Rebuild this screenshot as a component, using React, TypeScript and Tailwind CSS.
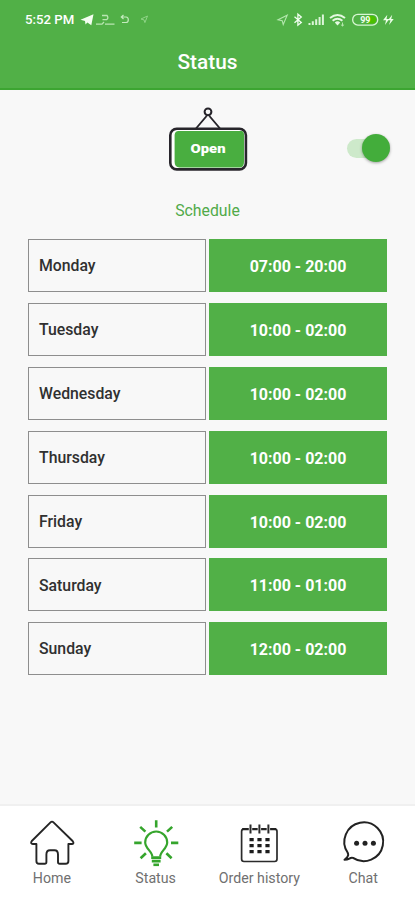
import React from "react"

const schedule = [
  { day: "Monday", hours: "07:00 - 20:00" },
  { day: "Tuesday", hours: "10:00 - 02:00" },
  { day: "Wednesday", hours: "10:00 - 02:00" },
  { day: "Thursday", hours: "10:00 - 02:00" },
  { day: "Friday", hours: "10:00 - 02:00" },
  { day: "Saturday", hours: "11:00 - 01:00" },
  { day: "Sunday", hours: "12:00 - 02:00" },
]

const HomeIcon = () => (
  <svg className="h-[50px] w-[52px]" viewBox="0 0 52 50" fill="none" stroke="#252525" strokeWidth="1.9" strokeLinejoin="round" strokeLinecap="round">
    <path d="M26 3.6Q26.8 3.6 27.5 4.3L46.6 23Q48.6 25.6 46 26H42.4V43Q42.4 45.8 39.6 45.8H33.7Q32 45.8 32 44V36.5Q32 32.2 28.5 32.2H24Q20.4 32.2 20.4 36.5V44Q20.4 45.8 18.7 45.8H13Q10.4 45.8 10.4 43V26H7Q4 25.6 5.8 23L24.5 4.3Q25.2 3.6 26 3.6Z" />
  </svg>
)

const BulbIcon = () => (
  <svg className="h-[50px] w-[52px]" viewBox="0 0 52 50" fill="none" stroke="#35a52c" strokeWidth="2.2">
    <path d="M22.3 38.5C22.3 33.5 15.2 30.5 15.2 24.5A11 11 0 0 1 37.2 24.5C37.2 30.5 30.2 33.5 30.2 38.5" />
    <path d="M21.2 39.6H31.2M21.8 43.2H30.6" strokeWidth="2.8" />
    <path d="M23.4 46.8H29" strokeWidth="2.6" />
    <path d="M26.2 2.3V9.5M4.2 24.9H11.6M41 24.9H48.3M10.2 8.9L15.4 13.6M42.2 8.9L37 13.6M10.6 40.2L15.9 35.2M41.6 40.2L36.4 35.2" strokeWidth="2.6" />
  </svg>
)

const CalendarIcon = () => (
  <svg className="h-[50px] w-[52px]" viewBox="0 0 52 50" fill="none" stroke="#2b2b2b" strokeWidth="1.7">
    <rect x="8.6" y="11" width="35.4" height="32.5" rx="2.4" />
    <path d="M9.2 11.1H43.2" stroke="#222222" strokeWidth="2.1" />
    <path d="M17.5 6.6V15.6M26.4 6.6V15.6M35.4 6.6V15.6" stroke="#ffffff" strokeWidth="3.4" />
    <path d="M17.5 6.6V15.6M26.4 6.6V15.6M35.4 6.6V15.6" strokeWidth="2" />
    <path d="M16.5 21.7H20.7M24.4 21.7H28.6M32.4 21.7H36.6M16.5 27.6H20.7M24.4 27.6H28.6M32.4 27.6H36.6M16.5 33.6H20.7M24.4 33.6H28.6M32.4 33.6H36.6" stroke="#1d1d1d" strokeWidth="3.2" />
  </svg>
)

const ChatIcon = () => (
  <svg className="h-[50px] w-[52px]" viewBox="-1.2 0 52 50" fill="none" stroke="#222222" strokeWidth="2" strokeLinejoin="round">
    <path d="M9.4 34.5A19.4 19.4 0 1 1 14.8 39.9Q13 39.4 11.2 40.6Q9 41.8 6.3 41.8Q9.8 39.4 10 37.2Q10.1 36 9.4 34.5Z" />
    <g fill="#222222" stroke="none">
      <circle cx="18.4" cy="25.3" r="2.5" />
      <circle cx="26.8" cy="25.3" r="2.5" />
      <circle cx="35.2" cy="25.3" r="2.5" />
    </g>
  </svg>
)

const tabs = [
  { label: "Home", icon: <HomeIcon /> },
  { label: "Status", icon: <BulbIcon /> },
  { label: "Order history", icon: <CalendarIcon /> },
  { label: "Chat", icon: <ChatIcon /> },
]

const StatusBar = () => (
  <div className="flex h-[40px] items-center justify-between pl-[25px] pr-[21px]">
    <div className="flex items-center gap-[6px]">
      <span className="text-[13.2px] leading-5 font-medium whitespace-nowrap text-white">5:52 PM</span>
      <svg className="h-5 w-[74px]" viewBox="0 0 74 20" fill="none">
        <path d="M0.5 9.8L13.5 4.2L11.3 15.2L7.4 12.4L5.5 14.5L5 11.1Z" fill="#f4fff1" />
        <path d="M22 5.5H27Q29 8 26.5 9.7H22.5M16 14.2H22L24 12M25 14.2H34.5" stroke="#b9e5b2" strokeWidth="1.3" />
        <path d="M41.5 7H46Q48.3 7.2 48.3 9.7Q48.3 12.5 46 12.5H42M43.5 5L41.3 7L43.5 9" stroke="#c4eabe" strokeWidth="1.2" />
        <path d="M61 9L67.5 6L64.9 12.6L64 9.9Z" stroke="#8fd487" strokeWidth="1" />
      </svg>
    </div>
    <svg className="h-5 w-[118px]" viewBox="0 0 118 20" fill="none">
      <path d="M2 9.7L11.2 5.2L7.2 14.5L6.2 10.7Z" stroke="#b4e7ae" strokeWidth="1.1" />
      <path d="M18.5 6.8L25.3 12.4L21.9 15.2V4.2L25.3 7L18.5 12.8" stroke="#f1fff0" strokeWidth="1.3" />
      <path d="M33.5 15V13M36.8 15V11.2M40.2 15V9.2M43.6 15V7M46.9 15V4.6" stroke="#dcf5d9" strokeWidth="2" />
      <path d="M54 8Q61.5 1.8 69 8M56.6 10.8Q61.5 6.8 66.4 10.8" stroke="#e4f9e1" strokeWidth="1.9" />
      <path d="M58.8 12.4Q61.5 10.3 64.2 12.4L61.5 15.4Z" fill="#e4f9e1" />
      <path d="M66.5 12.5V16M64.9 14.6L66.5 16L68.1 14.6" stroke="#b5e6ad" />
      <rect x="76.7" y="4.3" width="25" height="10.8" rx="5.2" stroke="#d8f6d3" strokeWidth="1.3" />
      <path d="M91 6H96.5Q100 6.3 100 9.7Q100 13.2 96.5 13.4H91Z" fill="#4bc000" />
      <text x="89.3" y="13" textAnchor="middle" fill="#f3fff0" fontSize="9" fontWeight="700">99</text>
      <path d="M111.3 4.7L107 10.2H110L109 14.9L113.2 9H110.5ZM116.2 4.7L112 10.2H114.5L113 14.9L117.7 9H115.2Z" fill="#edffe9" />
    </svg>
  </div>
)

const OpenSign = () => (
  <svg className="h-[66px] w-[80px]" viewBox="0 0 80 66" fill="none">
    <circle cx="40" cy="5.8" r="3.4" stroke="#252329" strokeWidth="2" />
    <path d="M28 22.5L38.6 10M52 22.5L41.4 10" stroke="#252329" strokeWidth="1.9" />
    <rect x="2.3" y="22.8" width="75.6" height="40.6" rx="6.5" fill="#ffffff" stroke="#28262c" strokeWidth="2.6" />
    <path d="M10.5 25H73.5Q76 25 76 29V56Q76 61.4 72 61.4H11.5Q6.6 61.4 6.6 56V29Q7 25 10.5 25Z" fill="#49ae40" />
    <text x="40" y="47.4" textAnchor="middle" fill="#ffffff" fontSize="13.4" fontWeight="900" textLength="35" lengthAdjust="spacingAndGlyphs">Open</text>
  </svg>
)

const App = () => {
  return (
    <div className="flex h-[900px] w-[415px] flex-col overflow-hidden bg-[#f8f8f8] font-['Roboto','Liberation_Sans',sans-serif]">
      <header className="h-[90px] shrink-0 border-b-2 border-[#3ca531] bg-[#51b047]">
        <StatusBar />
        <h1 className="pt-[8px] text-center text-[20.8px] leading-7 font-medium text-white">Status</h1>
      </header>

      <main className="flex-1 px-7">
        <div className="grid h-[84px] grid-cols-[1fr_80px_1fr] pt-[16px]">
          <div className="col-start-2">
            <OpenSign />
          </div>
          <div className="mt-[28px] -mr-[3px] flex h-7 items-center justify-end">
            <div className="flex h-[19px] w-[43px] items-center justify-end rounded-full bg-[#cde9ca]">
              <div className="size-[28px] shrink-0 rounded-full bg-[#43ad3b] shadow-[0_1px_3px_rgba(0,0,0,0.35)]"></div>
            </div>
          </div>
        </div>

        <h2 className="mt-[25px] text-center text-[15.8px] leading-6 text-[#51aa49]">Schedule</h2>

        <div className="mt-[16.2px] flex flex-col gap-[10.85px]">
          {schedule.map((item) => (
            <div key={item.day} className="grid h-[53px] grid-cols-2 gap-[3px]">
              <div className="flex items-center border border-[#8e8e8e] pt-px pl-[10px] text-[15.8px] font-medium text-[#303030]">{item.day}</div>
              <div className="flex items-center justify-center bg-[#51b047] pt-[3px] text-[16px] font-bold text-white">{item.hours}</div>
            </div>
          ))}
        </div>
      </main>

      <nav className="grid h-[96px] shrink-0 grid-cols-4 border-t-2 border-[#f0f0f0] bg-white pt-[12px]">
        {tabs.map((tab) => (
          <a key={tab.label} className="flex flex-col items-center">
            {tab.icon}
            <span className="text-[14.2px] leading-5 whitespace-nowrap text-[#707070]">{tab.label}</span>
          </a>
        ))}
      </nav>
    </div>
  )
}

export default App
